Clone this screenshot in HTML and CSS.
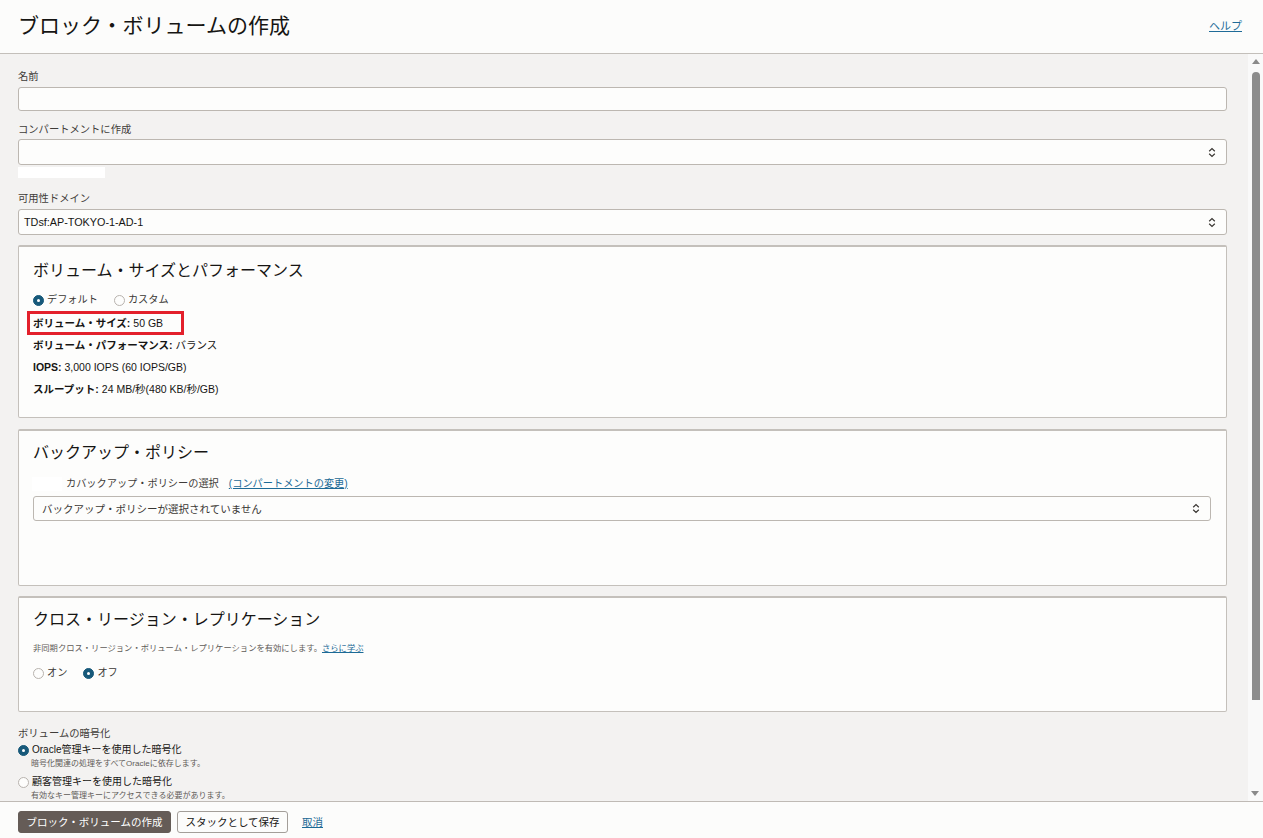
FILE: index.html
```html
<!DOCTYPE html>
<html lang="ja">
<head>
<meta charset="utf-8">
<title>ブロック・ボリュームの作成</title>
<link rel="stylesheet" href="styles.css">
</head>
<body>
<div class="page">
  <header class="header">
    <h1 class="title">ブロック・ボリュームの作成</h1>
    <a class="help" href="#">ヘルプ</a>
  </header>
  <div class="main">
    <div class="content">
      <div class="field f-name">
        <div class="label">名前</div>
        <div class="input"></div>
      </div>
      <div class="field f-comp">
        <div class="label">コンパートメントに作成</div>
        <div class="select">
          <span class="select-text"></span>
          <svg class="chev" width="8" height="11" viewBox="0 0 8 11"><path d="M1.2 4.2 L4 1.5 L6.8 4.2 M1.2 6.8 L4 9.5 L6.8 6.8" fill="none" stroke="#3a3632" stroke-width="1.2"/></svg>
        </div>
        <div class="redact"></div>
      </div>
      <div class="field f-ad">
        <div class="label">可用性ドメイン</div>
        <div class="select">
          <span class="select-text latin">TDsf:AP-TOKYO-1-AD-1</span>
          <svg class="chev" width="8" height="11" viewBox="0 0 8 11"><path d="M1.2 4.2 L4 1.5 L6.8 4.2 M1.2 6.8 L4 9.5 L6.8 6.8" fill="none" stroke="#3a3632" stroke-width="1.2"/></svg>
        </div>
      </div>

      <section class="panel p1">
        <h2 class="panel-title">ボリューム・サイズとパフォーマンス</h2>
        <div class="radios">
          <label class="radio"><span class="dot on"></span>デフォルト</label>
          <label class="radio"><span class="dot"></span>カスタム</label>
        </div>
        <div class="info">
          <div class="row"><span class="hl"><b>ボリューム・サイズ:</b> 50 GB</span></div>
          <div class="row"><b>ボリューム・パフォーマンス:</b> バランス</div>
          <div class="row"><b>IOPS:</b> 3,000 IOPS (60 IOPS/GB)</div>
          <div class="row"><b>スループット:</b> 24 MB/秒(480 KB/秒/GB)</div>
        </div>
      </section>

      <section class="panel p2">
        <h2 class="panel-title">バックアップ・ポリシー</h2>
        <div class="policy-label"><span class="redact2"></span><span class="pl-text">カバックアップ・ポリシーの選択</span><a class="link" href="#">(コンパートメントの変更)</a></div>
        <div class="select inner">
          <span class="select-text muted">バックアップ・ポリシーが選択されていません</span>
          <svg class="chev" width="8" height="11" viewBox="0 0 8 11"><path d="M1.2 4.2 L4 1.5 L6.8 4.2 M1.2 6.8 L4 9.5 L6.8 6.8" fill="none" stroke="#3a3632" stroke-width="1.2"/></svg>
        </div>
      </section>

      <section class="panel p3">
        <h2 class="panel-title">クロス・リージョン・レプリケーション</h2>
        <p class="small">非同期クロス・リージョン・ボリューム・レプリケーションを有効にします。<a class="link" href="#">さらに学ぶ</a></p>
        <div class="radios r3">
          <label class="radio"><span class="dot"></span>オン</label>
          <label class="radio"><span class="dot on"></span>オフ</label>
        </div>
      </section>

      <div class="enc">
        <div class="label">ボリュームの暗号化</div>
        <label class="radio big"><span class="dot on"></span>Oracle管理キーを使用した暗号化</label>
        <div class="sub">暗号化関連の処理をすべてOracleに依存します。</div>
        <label class="radio big second"><span class="dot"></span>顧客管理キーを使用した暗号化</label>
        <div class="sub">有効なキー管理キーにアクセスできる必要があります。</div>
      </div>
    </div>
    <div class="scrollbar">
      <span class="arrow up"></span>
      <span class="thumb"></span>
      <span class="arrow down"></span>
    </div>
  </div>
  <footer class="footer">
    <button class="btn primary">ブロック・ボリュームの作成</button>
    <button class="btn secondary">スタックとして保存</button>
    <a class="link cancel" href="#">取消</a>
  </footer>
</div>
</body>
</html>
```
FILE: styles.css
```css
* { box-sizing: border-box; }
html, body { margin: 0; padding: 0; }
body {
  font-family: "Liberation Sans", "Noto Sans CJK JP", sans-serif;
  color: #161513;
  background: #f3f2f1;
}
.page {
  width: 1263px;
  height: 838px;
  display: flex;
  flex-direction: column;
  overflow: hidden;
}
.header {
  height: 54px;
  flex: 0 0 54px;
  background: #fcfcfb;
  border-bottom: 1px solid #c3bfba;
  display: flex;
  align-items: center;
  justify-content: space-between;
  padding: 0 21px 2px 18px;
}
.title {
  margin: 0;
  font-size: 21px;
  font-weight: normal;
  line-height: 28px;
  color: #161513;
}
.help {
  font-size: 11px;
  color: #1f6b98;
  text-decoration: underline;
  line-height: 14px;
}
.main {
  flex: 1 1 auto;
  display: flex;
  min-height: 0;
  overflow: hidden;
}
.content {
  flex: 1 1 auto;
  padding: 16px 21px 0 18px;
  overflow: hidden;
}
.scrollbar {
  flex: 0 0 15px;
  background: #f9f9f9;
  display: flex;
  flex-direction: column;
  align-items: center;
  padding-top: 5px;
  position: relative;
}
.arrow {
  width: 0;
  height: 0;
  border-left: 4px solid transparent;
  border-right: 4px solid transparent;
}
.arrow.up { border-bottom: 5px solid #8a8a8a; }
.arrow.down {
  border-top: 5px solid #8a8a8a;
  position: absolute;
  bottom: 5px;
  left: 3px;
}
.thumb {
  margin-top: 8px;
  width: 8px;
  height: 628px;
  border-radius: 4px 4px 0 0;
  background: #8c8c8c;
}
.label {
  font-size: 10.3px;
  line-height: 14px;
  color: #3f3c39;
}
.field .label { margin-bottom: 3px; }
.f-comp { margin-top: 12px; }
.f-comp .label { margin-bottom: 2px; }
.f-ad { margin-top: 14px; }
.f-ad .label { margin-bottom: 3px; }
.input {
  height: 24px;
  background: #fdfdfc;
  border: 1px solid #bcb7b1;
  border-radius: 3px;
}
.select {
  height: 26px;
  background: #fdfdfc;
  border: 1px solid #bcb7b1;
  border-radius: 3px;
  display: flex;
  align-items: center;
  justify-content: space-between;
  padding: 0 10px 0 5px;
}
.select-text {
  font-size: 10.5px;
  line-height: 14px;
}
.select-text.latin { font-size: 10.8px; }
.redact {
  margin-top: 2px;
  width: 87px;
  height: 11px;
  background: #ffffff;
}
.panel {
  background: #fdfdfc;
  border: 1px solid #c4c0bb;
  border-top: 2px solid #c4c0bb;
  border-radius: 2px;
  padding: 11px 15px 0 14px;
}
.panel-title {
  margin: 0;
  font-size: 16px;
  font-weight: normal;
  line-height: 22px;
  color: #161513;
}
.p1 { margin-top: 10px; height: 173px; padding-top: 13px; }
.p2 { margin-top: 11px; height: 157px; }
.p3 { margin-top: 10px; height: 116px; }
.radios {
  display: flex;
  gap: 16px;
  margin-top: 11px;
  height: 14px;
  align-items: center;
}
.radio {
  display: flex;
  align-items: center;
  gap: 3px;
  font-size: 10.2px;
  line-height: 14px;
  color: #3a3734;
}
.dot {
  width: 11px;
  height: 11px;
  border-radius: 50%;
  border: 1px solid #b8b3ae;
  background: #fdfdfc;
  position: relative;
  flex: 0 0 11px;
}
.dot.on {
  background: #17597a;
  border-color: #17597a;
}
.dot.on::after {
  content: "";
  position: absolute;
  width: 3px;
  height: 3px;
  border-radius: 50%;
  background: #ffffff;
  left: 3px;
  top: 3px;
}
.info { margin-top: 5px; }
.row {
  font-size: 10.5px;
  line-height: 22px;
  height: 22px;
  color: #161513;
}
.row b { font-weight: bold; }
.hl {
  display: inline-block;
  height: 24px;
  line-height: 18px;
  border: 3px solid #e3202b;
  padding: 0 18px 0 3px;
  margin-left: -6px;
  margin-top: -1px;
  vertical-align: top;
}
.policy-label {
  margin-top: 13px;
  display: flex;
  align-items: center;
  font-size: 10.2px;
  line-height: 14px;
  color: #3f3c39;
}
.redact2 {
  width: 30px;
  height: 14px;
  background: #ffffff;
  margin-left: -1px;
  margin-right: 4px;
}
.pl-text { margin-right: 10px; }
.link {
  color: #1c6a96;
  text-decoration: underline;
}
.select.inner {
  margin-top: 5px;
  height: 25px;
  padding-left: 8px;
}
.muted { color: #3a3734; }
.small {
  margin: 11px 0 0;
  font-size: 8.3px;
  line-height: 12px;
  color: #5f5b58;
}
.r3 { margin-top: 12px; }
.enc { margin-top: 15px; }
.enc .label { margin-bottom: 2px; }
.radio.big {
  font-size: 10px;
  color: #161513;
}
.radio.second { margin-top: 5px; }
.sub {
  padding-left: 13px;
  font-size: 8px;
  line-height: 13px;
  color: #5f5b58;
}
.footer {
  flex: 0 0 37px;
  height: 37px;
  background: #fcfcfb;
  border-top: 1px solid #bfbab5;
  display: flex;
  align-items: flex-start;
  padding: 9px 18px 0;
  gap: 6px;
}
.btn {
  font-family: "Liberation Sans", "Noto Sans CJK JP", sans-serif;
  height: 22px;
  font-size: 10.5px;
  line-height: 14px;
  border-radius: 3px;
  padding: 0;
  white-space: nowrap;
  text-align: center;
  cursor: pointer;
}
.btn.primary {
  background: #655c57;
  color: #ffffff;
  border: 1px solid #655c57;
  width: 153px;
}
.btn.secondary {
  background: #fcfcfb;
  color: #161513;
  border: 1px solid #a39e99;
  width: 111px;
}
.cancel {
  font-size: 10.5px;
  line-height: 22px;
  margin-left: 8px;
}
```
